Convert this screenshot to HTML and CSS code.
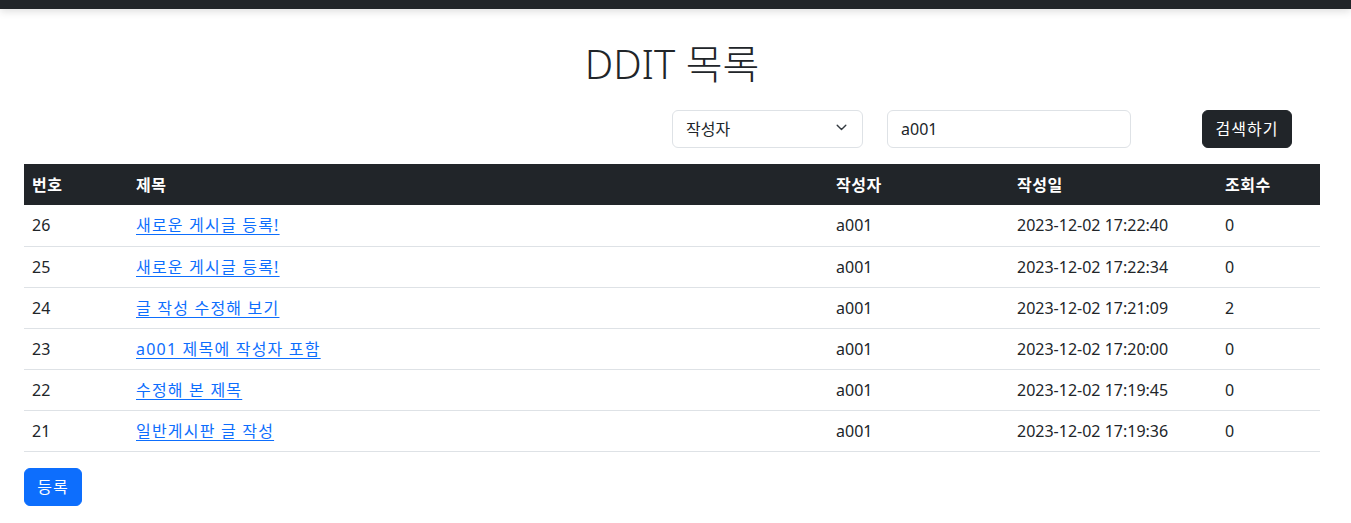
FILE: index.html
```html
<!DOCTYPE html>
<html lang="ko">
<head>
<meta charset="utf-8">
<title>DDIT 목록</title>
<link rel="stylesheet" href="styles.css">
</head>
<body>
<div class="topbar"></div>
<main class="container">
  <h1 class="title">DDIT 목록</h1>
  <form class="search">
    <div class="select-wrap">
      <select class="form-select">
        <option>작성자</option>
        <option>제목</option>
      </select>
      <svg class="chev" width="11" height="7" viewBox="0 0 11 7"><path d="M1.2 1.2 5.5 5.5l4.3-4.3" fill="none" stroke="#343a40" stroke-width="1.4" stroke-linecap="round" stroke-linejoin="round"/></svg>
    </div>
    <input class="form-control" type="text" value="a001">
    <button class="btn btn-dark" type="button">검색하기</button>
  </form>
  <table class="table">
    <thead>
      <tr><th class="c1">번호</th><th class="c2">제목</th><th class="c3">작성자</th><th class="c4">작성일</th><th class="c5">조회수</th></tr>
    </thead>
    <tbody>
      <tr><td>26</td><td><a href="#">새로운 게시글 등록!</a></td><td>a001</td><td>2023-12-02 17:22:40</td><td>0</td></tr>
      <tr><td>25</td><td><a href="#">새로운 게시글 등록!</a></td><td>a001</td><td>2023-12-02 17:22:34</td><td>0</td></tr>
      <tr><td>24</td><td><a href="#">글 작성 수정해 보기</a></td><td>a001</td><td>2023-12-02 17:21:09</td><td>2</td></tr>
      <tr><td>23</td><td><a href="#">a001 제목에 작성자 포함</a></td><td>a001</td><td>2023-12-02 17:20:00</td><td>0</td></tr>
      <tr><td>22</td><td><a href="#">수정해 본 제목</a></td><td>a001</td><td>2023-12-02 17:19:45</td><td>0</td></tr>
      <tr><td>21</td><td><a href="#">일반게시판 글 작성</a></td><td>a001</td><td>2023-12-02 17:19:36</td><td>0</td></tr>
    </tbody>
  </table>
  <button class="btn btn-primary" type="button">등록</button>
</main>
</body>
</html>
```
FILE: styles.css
```css
* { box-sizing: border-box; }
html, body { margin: 0; padding: 0; }
body {
  font-family: "Noto Sans", "Noto Sans CJK KR", sans-serif;
  font-size: 16px;
  line-height: 1.5;
  color: #212529;
  background: #fff;
}
.topbar {
  height: 9px;
  background: #212529;
  box-shadow: 0 2px 8px rgba(0,0,0,0.15);
}
.container {
  width: 1296px;
  margin-left: 24px;
}
.title {
  margin: 29px 0 0;
  text-align: center;
  font-size: 40px;
  font-weight: 300;
  line-height: 52px;
  height: 72px;
}
.search {
  display: flex;
  align-items: center;
  justify-content: flex-end;
  padding-right: 28px;
  height: 38px;
}
.select-wrap {
  position: relative;
  width: 191px;
  margin-right: 24px;
}
.form-select, .form-control {
  font: inherit;
  font-size: 16px;
  height: 38px;
  border: 1px solid #dee2e6;
  border-radius: 6px;
  color: #212529;
  background: #fff;
  padding: 0 13px;
}
.form-select {
  width: 100%;
  appearance: none;
  -webkit-appearance: none;
  padding-right: 36px;
}
.chev {
  position: absolute;
  right: 16px;
  top: 14px;
  pointer-events: none;
}
.form-control {
  width: 244px;
  margin-right: 71px;
}
.btn {
  font: inherit;
  font-size: 16px;
  line-height: 24px;
  border-radius: 6px;
  border: 1px solid transparent;
  color: #fff;
  cursor: pointer;
  letter-spacing: 1px;
  padding: 6px 0;
  text-align: center;
}
.btn-dark {
  background: #212529;
  border-color: #212529;
  width: 90px;
}
.btn-primary {
  background: #0d6efd;
  border-color: #0d6efd;
  width: 58px;
}
.table {
  width: 100%;
  border-collapse: collapse;
  margin-top: 16px;
  margin-bottom: 16px;
  table-layout: fixed;
}
.table th, .table td {
  text-align: left;
  padding: 0 8px;
  height: 41px;
  border-bottom: 1px solid #dee2e6;
  vertical-align: middle;
}
.table thead th {
  background: #212529;
  color: #fff;
  font-weight: 700;
  border-bottom: 0;
  letter-spacing: 0.5px;
}
.c1 { width: 104px; }
.c2 { width: 700px; }
.c3 { width: 181px; }
.c4 { width: 208px; }
.c5 { width: 103px; }
.table a {
  color: #0d6efd;
  text-decoration: underline;
  text-underline-offset: 3px;
  letter-spacing: 1.2px;
}
```
